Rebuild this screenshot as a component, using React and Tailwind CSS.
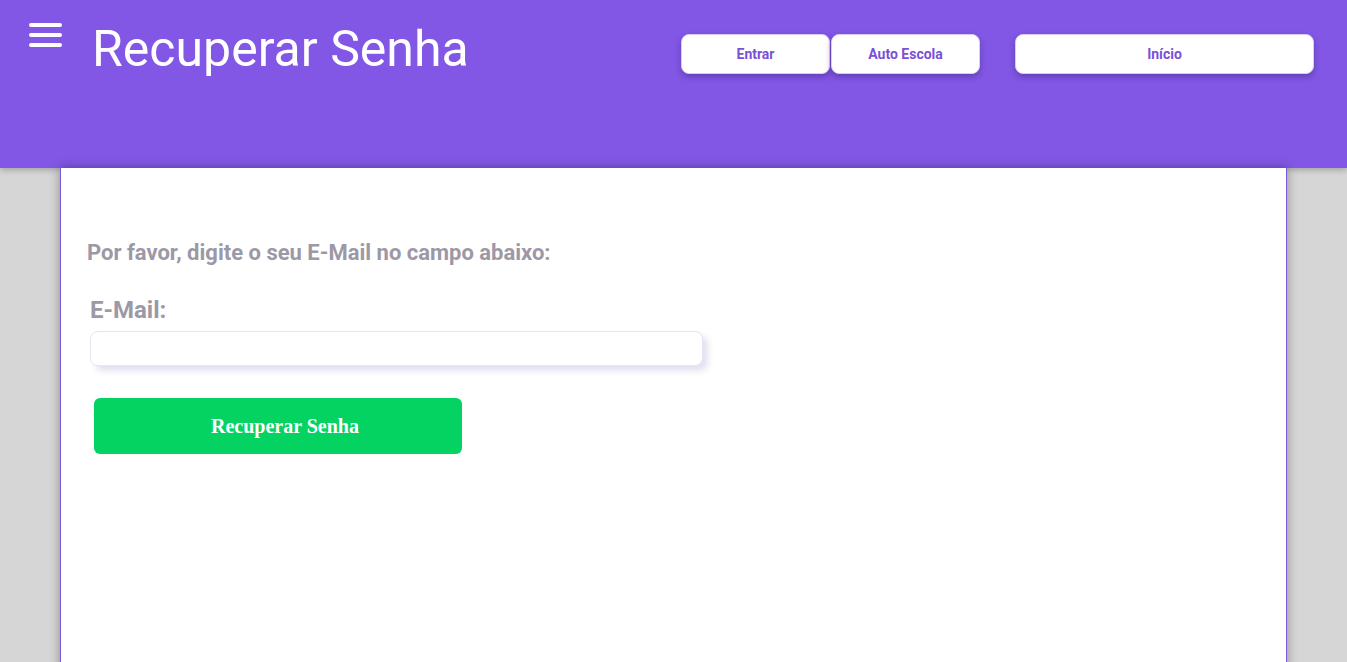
import React from "react";

const NavButton = ({ label, className }) => (
  <button
    className={`h-[40px] rounded-lg bg-white border border-[#d9ccf7] shadow-[0_3px_6px_rgba(40,20,90,0.35)] text-[14px] font-bold text-[#7a4fd9] ${className}`}
  >
    {label}
  </button>
);

const App = () => {
  return (
    <div className="h-screen overflow-hidden bg-[#d6d6d6] font-['Roboto',sans-serif]">
      <header className="relative z-0 h-[168px] bg-[#8257e5] shadow-[0_2px_6px_rgba(0,0,0,0.25)]">
        <div className="flex items-start">
          <div className="ml-[29px] mt-[23px] flex flex-col gap-[6px]">
            <span className="block h-[4px] w-[33px] rounded-full bg-white" />
            <span className="block h-[4px] w-[33px] rounded-full bg-white" />
            <span className="block h-[4px] w-[33px] rounded-full bg-white" />
          </div>
          <h1 className="ml-[30px] mt-[19px] text-[50px] leading-[60px] text-white font-normal">
            Recuperar Senha
          </h1>
          <nav className="ml-auto mr-[33px] mt-[34px] flex">
            <NavButton label="Entrar" className="w-[149px]" />
            <NavButton label="Auto Escola" className="ml-[1px] w-[149px]" />
            <NavButton label="Início" className="ml-[35px] w-[299px]" />
          </nav>
        </div>
      </header>

      <main className="relative z-10 mx-auto h-[520px] w-[1227px] bg-white border border-t-0 border-[#7a5ad6] shadow-[0_0_10px_rgba(0,0,0,0.35)]">
        <div className="pl-[26px] pt-[70px]">
          <p className="text-[22px] font-bold text-[#9c98a6] leading-[30px]">
            Por favor, digite o seu E-Mail no campo abaixo:
          </p>
          <div className="mt-[27px] pl-[3px]">
            <label className="block text-[24px] font-bold text-[#9c98a6] leading-[30px]">
              E-Mail:
            </label>
            <input
              type="email"
              className="mt-[6px] block h-[35px] w-[613px] rounded-lg border border-[#e6e6f0] bg-white shadow-[5px_5px_6px_#e2e2f0] outline-none"
            />
            <button className="ml-[4px] mt-[32px] h-[56px] w-[368px] rounded-md bg-[#04d361] pl-[14px] font-['Liberation_Serif',serif] text-[20px] font-bold text-white">
              Recuperar Senha
            </button>
          </div>
        </div>
      </main>
    </div>
  );
};

export default App;
